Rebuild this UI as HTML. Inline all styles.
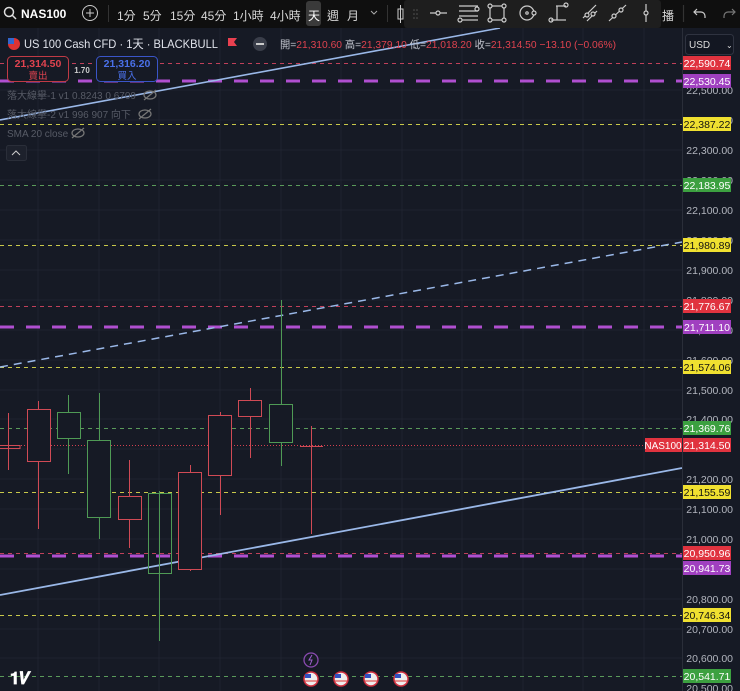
<!DOCTYPE html>
<html><head><meta charset="utf-8">
<style>
html,body{margin:0;padding:0;background:#151924;width:740px;height:691px;overflow:hidden;font-family:"Liberation Sans","Noto Sans CJK TC",sans-serif;}
.tb{position:absolute;left:0;top:0;width:740px;height:28px;background:#0f0f0f;color:#d8d8d8;font-size:12px;}
.tb span{position:absolute;top:7px;}
</style></head><body>
<svg width="740" height="691" style="position:absolute;left:0;top:0" xmlns="http://www.w3.org/2000/svg" font-family="Liberation Sans, Noto Sans CJK TC, sans-serif">
<rect x="0" y="28" width="740" height="663" fill="#161a25"/>
<g stroke="#1f2330" stroke-width="1">
<line x1="38" y1="28" x2="38" y2="691"/><line x1="99" y1="28" x2="99" y2="691"/><line x1="159" y1="28" x2="159" y2="691"/><line x1="220" y1="28" x2="220" y2="691"/><line x1="281" y1="28" x2="281" y2="691"/><line x1="341" y1="28" x2="341" y2="691"/><line x1="402" y1="28" x2="402" y2="691"/><line x1="462" y1="28" x2="462" y2="691"/><line x1="523" y1="28" x2="523" y2="691"/><line x1="583" y1="28" x2="583" y2="691"/><line x1="644" y1="28" x2="644" y2="691"/>
<line x1="0" y1="90" x2="682" y2="90"/><line x1="0" y1="120" x2="682" y2="120"/><line x1="0" y1="150" x2="682" y2="150"/><line x1="0" y1="180" x2="682" y2="180"/><line x1="0" y1="210" x2="682" y2="210"/><line x1="0" y1="240" x2="682" y2="240"/><line x1="0" y1="270" x2="682" y2="270"/><line x1="0" y1="300" x2="682" y2="300"/><line x1="0" y1="330" x2="682" y2="330"/><line x1="0" y1="360" x2="682" y2="360"/><line x1="0" y1="390" x2="682" y2="390"/><line x1="0" y1="419" x2="682" y2="419"/><line x1="0" y1="449" x2="682" y2="449"/><line x1="0" y1="479" x2="682" y2="479"/><line x1="0" y1="509" x2="682" y2="509"/><line x1="0" y1="539" x2="682" y2="539"/><line x1="0" y1="569" x2="682" y2="569"/><line x1="0" y1="599" x2="682" y2="599"/><line x1="0" y1="629" x2="682" y2="629"/><line x1="0" y1="658" x2="682" y2="658"/>
</g>
<g stroke-width="1" stroke-dasharray="4,4">
<line x1="0" y1="63.5" x2="682" y2="63.5" stroke="#c0405a"/>
<line x1="0" y1="124.5" x2="682" y2="124.5" stroke="#c8c84a"/>
<line x1="0" y1="185.5" x2="682" y2="185.5" stroke="#5a9a5a"/>
<line x1="0" y1="245.5" x2="682" y2="245.5" stroke="#c8c84a"/>
<line x1="0" y1="306.5" x2="682" y2="306.5" stroke="#c0405a"/>
<line x1="0" y1="367.5" x2="682" y2="367.5" stroke="#c8c84a"/>
<line x1="0" y1="428.5" x2="682" y2="428.5" stroke="#5a9a5a"/>
<line x1="0" y1="492.5" x2="682" y2="492.5" stroke="#c8c84a"/>
<line x1="0" y1="553.5" x2="682" y2="553.5" stroke="#c0405a"/>
<line x1="0" y1="615.5" x2="682" y2="615.5" stroke="#c8c84a"/>
<line x1="0" y1="676.5" x2="682" y2="676.5" stroke="#5a9a5a"/>
</g>
<line x1="0" y1="445.5" x2="682" y2="445.5" stroke="#d04050" stroke-dasharray="1,2"/>
<g stroke="#b04fd0" stroke-width="3" stroke-dasharray="14,12">
<line x1="0" y1="81" x2="682" y2="81"/>
<line x1="0" y1="327" x2="682" y2="327"/>
<line x1="0" y1="556" x2="682" y2="556"/>
</g>
<line x1="0" y1="120" x2="500" y2="28" stroke="#9ab8e8" stroke-width="1.6"/>
<line x1="0" y1="367" x2="682" y2="242" stroke="#9ab8e8" stroke-width="1.5" stroke-dasharray="8,6"/>
<line x1="0" y1="595" x2="682" y2="468" stroke="#9ab8e8" stroke-width="1.8"/>
<g fill="none" stroke-width="1">
<g stroke="#d04a55">
<line x1="8.5" y1="413" x2="8.5" y2="470"/><rect x="-2" y="445.5" width="22" height="3"/>
<line x1="38.5" y1="401" x2="38.5" y2="529"/><rect x="27.5" y="409.5" width="23" height="52" fill="#161a25"/>
<line x1="129.5" y1="460" x2="129.5" y2="548"/><rect x="118.5" y="496.5" width="23" height="23" fill="#161a25"/>
<line x1="190.5" y1="465" x2="190.5" y2="571"/><rect x="178.5" y="472.5" width="23" height="97" fill="#161a25"/>
<line x1="220.5" y1="412" x2="220.5" y2="515"/><rect x="208.5" y="415.5" width="23" height="60" fill="#161a25"/>
<line x1="250.5" y1="388" x2="250.5" y2="458"/><rect x="238.5" y="400.5" width="23" height="16" fill="#161a25"/>
<line x1="311.5" y1="426" x2="311.5" y2="534"/><line x1="300" y1="446.5" x2="323" y2="446.5"/>
</g>
<g stroke="#4f9a55">
<line x1="68.5" y1="395" x2="68.5" y2="474"/><rect x="57.5" y="412.5" width="23" height="26" fill="#161a25"/>
<line x1="99.5" y1="393" x2="99.5" y2="539"/><rect x="87.5" y="440.5" width="23" height="77" fill="#161a25"/>
<line x1="159.5" y1="491" x2="159.5" y2="641"/><rect x="148.5" y="493.5" width="23" height="80"/>
<line x1="281.5" y1="300" x2="281.5" y2="466"/><rect x="269.5" y="404.5" width="23" height="38" fill="#161a25"/>
</g>
</g>
<rect x="682" y="28" width="58" height="663" fill="#161a25"/>
<line x1="682.5" y1="28" x2="682.5" y2="691" stroke="#2a2e39"/>
<g fill="#b2b5be" font-size="10.5" text-anchor="end">
<text x="733" y="94">22,500.00</text><text x="733" y="124">22,400.00</text><text x="733" y="154">22,300.00</text><text x="733" y="184">22,200.00</text><text x="733" y="214">22,100.00</text><text x="733" y="244">22,000.00</text><text x="733" y="274">21,900.00</text><text x="733" y="304">21,800.00</text><text x="733" y="334">21,700.00</text><text x="733" y="364">21,600.00</text><text x="733" y="394">21,500.00</text><text x="733" y="423">21,400.00</text><text x="733" y="513">21,100.00</text><text x="733" y="483">21,200.00</text><text x="733" y="543">21,000.00</text><text x="733" y="603">20,800.00</text><text x="733" y="633">20,700.00</text><text x="733" y="662">20,600.00</text><text x="733" y="692">20,500.00</text>
</g>
<g font-size="10.5" text-anchor="middle">
<rect x="683" y="56" width="48" height="14" fill="#e0333f"/><text x="707" y="67" fill="#fff">22,590.74</text>
<rect x="683" y="74" width="48" height="14" fill="#a040c0"/><text x="707" y="85" fill="#fff">22,530.45</text>
<rect x="683" y="117" width="48" height="14" fill="#f0e030"/><text x="707" y="128" fill="#111">22,387.22</text>
<rect x="683" y="178" width="48" height="14" fill="#3ca040"/><text x="707" y="189" fill="#fff">22,183.95</text>
<rect x="683" y="238" width="48" height="14" fill="#f0e030"/><text x="707" y="249" fill="#111">21,980.89</text>
<rect x="683" y="299" width="48" height="14" fill="#e0333f"/><text x="707" y="310" fill="#fff">21,776.67</text>
<rect x="683" y="320" width="48" height="14" fill="#a040c0"/><text x="707" y="331" fill="#fff">21,711.10</text>
<rect x="683" y="360" width="48" height="14" fill="#f0e030"/><text x="707" y="371" fill="#111">21,574.06</text>
<rect x="683" y="421" width="48" height="14" fill="#3ca040"/><text x="707" y="432" fill="#fff">21,369.76</text>
<rect x="683" y="438" width="48" height="14" fill="#e0333f"/><text x="707" y="449" fill="#fff">21,314.50</text>
<rect x="645" y="438" width="37" height="14" fill="#e0333f"/><text x="663" y="449" fill="#fff" font-size="10">NAS100</text>
<rect x="683" y="485" width="48" height="14" fill="#f0e030"/><text x="707" y="496" fill="#111">21,155.59</text>
<rect x="683" y="546" width="48" height="14" fill="#e0333f"/><text x="707" y="557" fill="#fff">20,950.96</text>
<rect x="683" y="561" width="48" height="14" fill="#a040c0"/><text x="707" y="572" fill="#fff">20,941.73</text>
<rect x="683" y="608" width="48" height="14" fill="#f0e030"/><text x="707" y="619" fill="#111">20,746.34</text>
<rect x="683" y="669" width="48" height="14" fill="#3ca040"/><text x="707" y="680" fill="#fff">20,541.71</text>
</g>
<rect x="685.5" y="34.5" width="48" height="20" rx="3" fill="#131722" stroke="#2f3340"/>
<text x="689" y="48" fill="#ddd" font-size="10">USD</text><text x="726" y="48" fill="#ddd" font-size="8">⌄</text>
<circle cx="14" cy="44" r="6" fill="#d33"/><rect x="8" y="38" width="6" height="6" fill="#36c"/>
<text x="24" y="48" fill="#e0e3eb" font-size="12" textLength="194" lengthAdjust="spacingAndGlyphs">US 100 Cash CFD · 1天 · BLACKBULL</text>
<path d="M228 38h9l-3 4 3 4h-9z" fill="#e94050"/>
<circle cx="260" cy="44" r="7" fill="#3a3e4a"/><rect x="256" y="43" width="8" height="2" fill="#ccc"/>
<text x="280" y="48" font-size="10.5" fill="#c0c3cc" textLength="336" lengthAdjust="spacingAndGlyphs">開=<tspan fill="#e0434f">21,310.60</tspan> 高=<tspan fill="#e0434f">21,379.10</tspan> 低=<tspan fill="#e0434f">21,018.20</tspan> 收=<tspan fill="#e0434f">21,314.50</tspan><tspan fill="#e0434f"> −13.10 (−0.06%)</tspan></text>
<rect x="7.5" y="56.5" width="61" height="25" rx="4" fill="#161a25" stroke="#c03a45"/>
<text x="38" y="67" fill="#e0434f" font-size="10.5" text-anchor="middle" font-weight="bold">21,314.50</text>
<text x="38" y="79" fill="#e0434f" font-size="9.5" text-anchor="middle">賣出</text>
<text x="82" y="73" fill="#ccc" font-size="8" text-anchor="middle" font-weight="bold">1.70</text>
<rect x="96.5" y="56.5" width="61" height="25" rx="4" fill="#161a25" stroke="#3a55c8"/>
<text x="127" y="67" fill="#4a70e8" font-size="10.5" text-anchor="middle" font-weight="bold">21,316.20</text>
<text x="127" y="79" fill="#4a70e8" font-size="9.5" text-anchor="middle">買入</text>
<g fill="#575b66" font-size="10">
<text x="7" y="99">落大線擧-1 v1 0.8243 0.6709</text>
<text x="7" y="118">落大線擧-2 v1 996 907 向下</text>
<text x="7" y="137">SMA 20 close</text>
</g>
<g fill="none" stroke="#777" stroke-width="1.2"><ellipse cx="150" cy="95" rx="6" ry="4"/><line x1="144" y1="100" x2="156" y2="90"/><ellipse cx="145" cy="114" rx="6" ry="4"/><line x1="139" y1="119" x2="151" y2="109"/><ellipse cx="78" cy="133" rx="6" ry="4"/><line x1="72" y1="138" x2="84" y2="128"/></g>
<rect x="6.5" y="145.5" width="20" height="15" rx="2" fill="#1d212c" stroke="#2a2e39"/><path d="M12 155l4-4 4 4" stroke="#ccc" fill="none"/>
<text x="10" y="684" fill="#fff" font-size="17" font-weight="bold">𝟏𝑽</text>
<circle cx="311" cy="660" r="7" fill="none" stroke="#8a4ab0" stroke-width="1.3"/><path d="M312 655l-3 5h3l-2 5" stroke="#a060d0" fill="none"/>
<g><circle cx="311" cy="679" r="7" fill="#eee" stroke="#d03040" stroke-width="1.5"/><rect x="305" y="674" width="6" height="4" fill="#3050c0"/><line x1="305" y1="681" x2="317" y2="681" stroke="#d33"/>
<circle cx="341" cy="679" r="7" fill="#eee" stroke="#d03040" stroke-width="1.5"/><rect x="335" y="674" width="6" height="4" fill="#3050c0"/><line x1="335" y1="681" x2="347" y2="681" stroke="#d33"/>
<circle cx="371" cy="679" r="7" fill="#eee" stroke="#d03040" stroke-width="1.5"/><rect x="365" y="674" width="6" height="4" fill="#3050c0"/><line x1="365" y1="681" x2="377" y2="681" stroke="#d33"/>
<circle cx="401" cy="679" r="7" fill="#eee" stroke="#d03040" stroke-width="1.5"/><rect x="395" y="674" width="6" height="4" fill="#3050c0"/><line x1="395" y1="681" x2="407" y2="681" stroke="#d33"/></g>
</svg>
<div class="tb">
<svg width="740" height="28" style="position:absolute;left:0;top:0">
<circle cx="9" cy="12" r="4.5" fill="none" stroke="#ddd" stroke-width="1.5"/><line x1="12" y1="15" x2="16" y2="19" stroke="#ddd" stroke-width="1.5"/>
<circle cx="90" cy="13" r="7.5" fill="none" stroke="#ccc"/><path d="M90 9v8M86 13h8" stroke="#ccc"/>
<line x1="108.5" y1="5" x2="108.5" y2="22" stroke="#333"/>
<rect x="306" y="1" width="15" height="25" rx="3" fill="#3a3a3a"/>
<path d="M371 11l3 3 3-3" stroke="#aaa" fill="none"/>
<line x1="387.5" y1="5" x2="387.5" y2="22" stroke="#333"/>
<rect x="398" y="9" width="5" height="10" fill="none" stroke="#ccc"/><line x1="400.5" y1="5" x2="400.5" y2="23" stroke="#ccc"/>
<rect x="404" y="0" width="257" height="28" rx="3" fill="#1e1e1e"/>
<g fill="#555"><circle cx="414" cy="10" r=".8"/><circle cx="417" cy="10" r=".8"/><circle cx="414" cy="14" r=".8"/><circle cx="417" cy="14" r=".8"/><circle cx="414" cy="18" r=".8"/><circle cx="417" cy="18" r=".8"/></g>
<g stroke="#ccc" fill="none" stroke-width="1.2">
<line x1="430" y1="13" x2="447" y2="13"/><circle cx="438" cy="13" r="2" fill="#1e1e1e"/>
<line x1="459" y1="6" x2="478" y2="6"/><line x1="459" y1="11" x2="478" y2="11"/><line x1="459" y1="16" x2="478" y2="16"/><line x1="462" y1="20" x2="478" y2="20"/><circle cx="477" cy="9" r="2"/><circle cx="460" cy="20" r="2"/>
<rect x="490" y="6" width="14" height="14"/><circle cx="490" cy="6" r="2" fill="#1e1e1e"/><circle cx="504" cy="6" r="2" fill="#1e1e1e"/><circle cx="490" cy="20" r="2" fill="#1e1e1e"/><circle cx="504" cy="20" r="2" fill="#1e1e1e"/>
<circle cx="527" cy="13" r="7"/><circle cx="527" cy="13" r="1.2"/><circle cx="534" cy="13" r="2" fill="#1e1e1e"/>
<line x1="556" y1="6" x2="566" y2="6"/><line x1="557" y1="6" x2="557" y2="20"/><line x1="551" y1="20" x2="566" y2="20"/><circle cx="566" cy="5" r="2"/><circle cx="551" cy="20" r="2"/>
<line x1="583" y1="18" x2="596" y2="5"/><line x1="587" y1="21" x2="597" y2="11"/><circle cx="587" cy="15" r="2" fill="#1e1e1e"/><circle cx="593" cy="14" r="2" fill="#1e1e1e"/>
<line x1="609" y1="21" x2="626" y2="5"/><circle cx="614" cy="16" r="2" fill="#1e1e1e"/><circle cx="621" cy="10" r="2" fill="#1e1e1e"/>
<line x1="646" y1="4" x2="646" y2="22"/><circle cx="646" cy="13" r="2" fill="#1e1e1e"/>
<line x1="683.5" y1="5" x2="683.5" y2="22" stroke="#333"/>
<path d="M697 9l-3 3 3 3M694 12h7a4 4 0 0 1 4 4v2"/>
<path d="M732 9l3 3-3 3M735 12h-7a4 4 0 0 0-4 4v2" stroke="#777"/>
</g>
</svg>
<span style="left:21px;font-weight:bold;color:#fff">NAS100</span>
<span style="left:117px">1分</span><span style="left:143px">5分</span><span style="left:170px">15分</span><span style="left:201px">45分</span><span style="left:233px">1小時</span><span style="left:270px">4小時</span><span style="left:308px;color:#fff">天</span><span style="left:327px">週</span><span style="left:347px">月</span>
<span style="left:662px">播</span>
</div>
</body></html>
